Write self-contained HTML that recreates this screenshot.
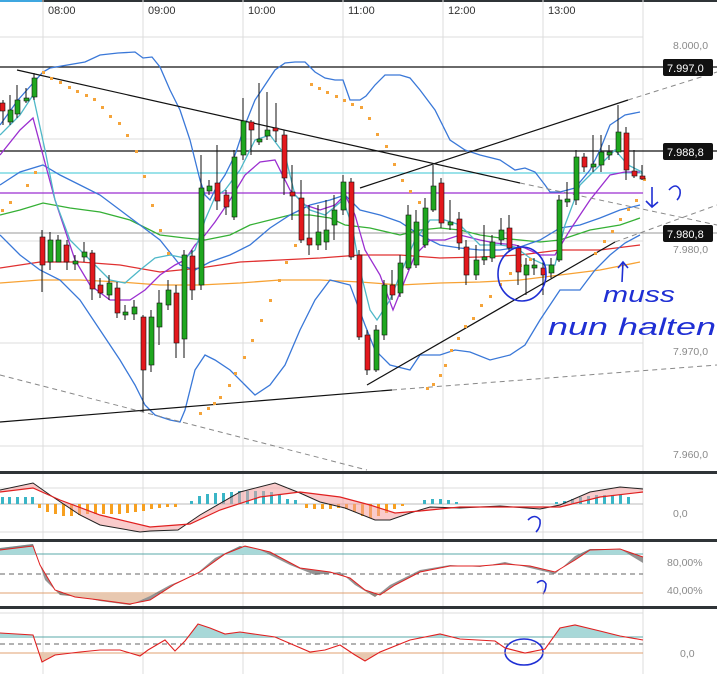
<!DOCTYPE html>
<html><head><meta charset="utf-8"><style>
html,body{margin:0;padding:0;background:#fff;}
svg{display:block;font-family:"Liberation Sans",sans-serif;}
.ax{font-size:10.5px;fill:#8a8a8a;}
.tm{font-size:11px;fill:#333;}
.lb{font-size:11px;fill:#fff;}
.hw{font-family:"Liberation Sans",sans-serif;font-style:italic;fill:#1f2fd4;}
</style></head><body>
<svg width="717" height="674" viewBox="0 0 717 674">
<defs>
<clipPath id="ct"><rect x="0" y="540" width="717" height="14"/></clipPath>
<clipPath id="co"><rect x="0" y="593" width="717" height="14"/></clipPath>
<clipPath id="ct2"><rect x="0" y="607" width="717" height="30"/></clipPath>
<clipPath id="co2"><rect x="0" y="653" width="717" height="21"/></clipPath>
</defs>
<rect width="717" height="674" fill="#fff"/>
<rect x="0" y="0" width="717" height="2" fill="#2f3437"/>
<rect x="0" y="0" width="42" height="2" fill="#3fa7e0"/>
<g stroke="#dcdcdc" stroke-width="1">
<line x1="43" y1="0" x2="43" y2="674"/><line x1="143" y1="0" x2="143" y2="674"/>
<line x1="243" y1="0" x2="243" y2="674"/><line x1="343" y1="0" x2="343" y2="674"/>
<line x1="443" y1="0" x2="443" y2="674"/><line x1="543" y1="0" x2="543" y2="674"/>
<line x1="643" y1="0" x2="643" y2="674"/>
<line x1="0" y1="37" x2="643" y2="37"/><line x1="0" y1="139" x2="643" y2="139"/>
<line x1="0" y1="241" x2="643" y2="241"/><line x1="0" y1="343" x2="643" y2="343"/>
<line x1="0" y1="446" x2="643" y2="446"/>
<line x1="0" y1="488" x2="643" y2="488"/><line x1="0" y1="532" x2="643" y2="532"/>
<line x1="0" y1="613" x2="643" y2="613"/>
</g>
<g class="tm"><text x="48" y="14">08:00</text><text x="148" y="14">09:00</text><text x="248" y="14">10:00</text><text x="348" y="14">11:00</text><text x="448" y="14">12:00</text><text x="548" y="14">13:00</text></g>
<line x1="0" y1="67" x2="717" y2="67" stroke="#111" stroke-width="1.2"/>
<line x1="0" y1="151" x2="717" y2="151" stroke="#111" stroke-width="1.2"/>
<line x1="0" y1="173" x2="643" y2="173" stroke="#5fd0dc" stroke-width="1.2"/>
<line x1="0" y1="193" x2="643" y2="193" stroke="#9b2fd0" stroke-width="1.2"/>
<line x1="0" y1="233" x2="717" y2="233" stroke="#999" stroke-width="1"/>
<g fill="none" stroke-width="1.3">
<polyline stroke="#f7a234" points="0,283 40,280 80,280 120,282 160,285 200,285 240,283 280,280 320,280 360,282 400,285 440,283 480,282 520,280 560,275 600,270 640,262"/>
<polyline stroke="#e03030" points="0,268 40,262 80,262 120,265 160,272 200,268 240,262 280,260 320,258 360,255 400,255 440,258 480,257 520,255 560,250 600,250 640,245"/>
<polyline stroke="#35b035" points="0,215 20,210 43,203 70,208 100,212 130,220 160,235 185,238 205,240 230,235 250,225 270,220 290,215 310,215 330,218 345,225 370,228 400,235 420,230 440,228 460,230 480,235 500,238 540,242 560,240 590,230 620,225 640,218"/>
<polyline stroke="#3a78d8" points="0,185 20,172 43,165 60,175 80,185 100,195 120,210 140,225 160,240 180,265 195,270 210,262 230,255 250,245 270,228 290,215 310,205 330,200 345,195 360,210 380,215 400,222 420,235 440,245 460,248 480,250 500,250 520,247 540,240 560,228 580,225 600,218 620,210 640,205"/>
<polyline stroke="#3a78d8" points="0,125 18,100 43,72 50,68 85,62 100,55 118,53 135,52 143,58 152,57 160,67 170,90 180,110 190,140 200,180 205,195 210,200 215,190 225,175 235,155 245,125 255,100 265,85 275,70 285,63 295,62 305,62 315,72 325,78 335,80 343,80 350,100 360,100 366,96 375,85 385,75 400,75 410,78 420,90 435,110 450,140 465,150 480,155 500,160 515,170 525,168 535,172 545,185 550,192 560,192 575,188 590,170 600,150 610,125 625,115 640,112"/>
<polyline stroke="#3a78d8" points="0,235 20,255 40,270 60,280 80,300 100,330 120,360 135,385 145,405 155,415 170,420 180,422 185,410 195,370 205,355 215,360 230,370 245,385 255,395 270,385 285,365 300,330 315,300 330,280 350,285 365,325 375,350 390,365 410,370 420,355 440,355 455,350 470,352 490,360 510,355 525,345 540,320 560,290 580,290 595,270 610,255 625,243 640,235"/>
<polyline stroke="#9b2fd0" points="0,155 20,130 33,118 55,200 75,260 90,285 110,300 130,300 145,290 160,275 175,265 185,260 195,245 205,235 215,222 230,200 245,175 260,162 275,160 290,190 305,205 320,210 335,205 345,195 355,215 365,250 380,275 393,310 405,280 415,255 430,240 445,240 460,235 480,240 495,243 515,245 525,248 540,255 555,255 570,230 590,200 610,175 625,172 640,172"/>
<polyline stroke="#4fb8c8" points="0,135 20,115 33,95 45,150 55,200 70,240 90,260 110,280 125,283 140,270 155,258 170,255 185,258 195,250 205,220 215,197 225,190 240,170 255,140 270,135 285,155 295,195 310,210 325,215 343,200 352,225 360,270 370,310 377,320 390,300 400,275 415,240 430,220 445,220 460,225 480,245 500,245 515,247 530,258 545,265 555,265 565,225 580,185 600,165 615,150 628,165 642,172"/>
</g>
<g stroke="#111" stroke-width="1.2">
<line x1="17" y1="70" x2="520" y2="183"/>
<line x1="360" y1="188" x2="628" y2="100"/>
<line x1="367" y1="385" x2="615" y2="242"/>
<line x1="0" y1="422" x2="392" y2="390"/>
</g>
<g stroke="#888" stroke-width="1" stroke-dasharray="5,4">
<line x1="520" y1="183" x2="717" y2="225"/>
<line x1="628" y1="100" x2="717" y2="72"/>
<line x1="615" y1="242" x2="717" y2="205"/>
<line x1="392" y1="390" x2="717" y2="365"/>
<line x1="0" y1="375" x2="367" y2="470"/>
</g>
<g fill="#f5a43a">
<rect x="1" y="209" width="3" height="3"/><rect x="9" y="201" width="3" height="3"/><rect x="26" y="184" width="3" height="3"/><rect x="34" y="171" width="3" height="3"/>
<rect x="42" y="71" width="3" height="3"/><rect x="50" y="77" width="3" height="3"/><rect x="59" y="81" width="3" height="3"/><rect x="68" y="86" width="3" height="3"/><rect x="76" y="90" width="3" height="3"/><rect x="85" y="94" width="3" height="3"/><rect x="93" y="98" width="3" height="3"/><rect x="101" y="106" width="3" height="3"/><rect x="109" y="115" width="3" height="3"/><rect x="118" y="122" width="3" height="3"/><rect x="126" y="134" width="3" height="3"/><rect x="135" y="150" width="3" height="3"/><rect x="143" y="175" width="3" height="3"/><rect x="151" y="204" width="3" height="3"/><rect x="159" y="229" width="3" height="3"/><rect x="167" y="252" width="3" height="3"/>
<rect x="199" y="412" width="3" height="3"/><rect x="207" y="407" width="3" height="3"/><rect x="213" y="402" width="3" height="3"/><rect x="219" y="396" width="3" height="3"/><rect x="228" y="384" width="3" height="3"/><rect x="234" y="372" width="3" height="3"/><rect x="243" y="356" width="3" height="3"/><rect x="251" y="339" width="3" height="3"/><rect x="260" y="319" width="3" height="3"/><rect x="269" y="299" width="3" height="3"/><rect x="278" y="279" width="3" height="3"/><rect x="285" y="261" width="3" height="3"/><rect x="294" y="244" width="3" height="3"/>
<rect x="310" y="83" width="3" height="3"/><rect x="318" y="87" width="3" height="3"/><rect x="326" y="91" width="3" height="3"/><rect x="335" y="95" width="3" height="3"/><rect x="343" y="99" width="3" height="3"/><rect x="351" y="103" width="3" height="3"/><rect x="360" y="106" width="3" height="3"/><rect x="368" y="117" width="3" height="3"/><rect x="376" y="133" width="3" height="3"/><rect x="385" y="145" width="3" height="3"/><rect x="393" y="163" width="3" height="3"/><rect x="401" y="179" width="3" height="3"/><rect x="409" y="190" width="3" height="3"/><rect x="418" y="201" width="3" height="3"/>
<rect x="426" y="387" width="3" height="3"/><rect x="432" y="383" width="3" height="3"/><rect x="439" y="374" width="3" height="3"/><rect x="444" y="364" width="3" height="3"/><rect x="450" y="349" width="3" height="3"/><rect x="457" y="337" width="3" height="3"/><rect x="464" y="325" width="3" height="3"/><rect x="472" y="317" width="3" height="3"/><rect x="480" y="304" width="3" height="3"/><rect x="489" y="295" width="3" height="3"/><rect x="499" y="283" width="3" height="3"/><rect x="509" y="272" width="3" height="3"/><rect x="519" y="264" width="3" height="3"/><rect x="529" y="258" width="3" height="3"/><rect x="594" y="252" width="3" height="3"/><rect x="603" y="240" width="3" height="3"/><rect x="611" y="230" width="3" height="3"/><rect x="619" y="218" width="3" height="3"/><rect x="627" y="208" width="3" height="3"/><rect x="635" y="199" width="3" height="3"/><rect x="643" y="178" width="3" height="3"/>
</g>
<g stroke="#111" stroke-width="1">
<line x1="3" y1="100" x2="3" y2="125"/><line x1="10" y1="95" x2="10" y2="125"/><line x1="17" y1="85" x2="17" y2="118"/><line x1="26" y1="88" x2="26" y2="103"/><line x1="34" y1="73" x2="34" y2="100"/>
<line x1="42" y1="230" x2="42" y2="292"/><line x1="50" y1="232" x2="50" y2="270"/><line x1="58" y1="235" x2="58" y2="262"/><line x1="67" y1="240" x2="67" y2="270"/><line x1="75" y1="255" x2="75" y2="270"/><line x1="84" y1="242" x2="84" y2="262"/><line x1="92" y1="250" x2="92" y2="300"/><line x1="100" y1="278" x2="100" y2="298"/><line x1="109" y1="275" x2="109" y2="300"/><line x1="117" y1="282" x2="117" y2="318"/><line x1="125" y1="305" x2="125" y2="320"/><line x1="134" y1="300" x2="134" y2="320"/><line x1="143" y1="315" x2="143" y2="412"/><line x1="151" y1="310" x2="151" y2="372"/><line x1="159" y1="290" x2="159" y2="345"/><line x1="168" y1="280" x2="168" y2="310"/><line x1="176" y1="285" x2="176" y2="358"/><line x1="184" y1="250" x2="184" y2="358"/><line x1="192" y1="250" x2="192" y2="300"/>
<line x1="201" y1="155" x2="201" y2="290"/><line x1="209" y1="180" x2="209" y2="195"/><line x1="217" y1="145" x2="217" y2="210"/><line x1="226" y1="190" x2="226" y2="215"/><line x1="234" y1="150" x2="234" y2="220"/><line x1="243" y1="98" x2="243" y2="160"/><line x1="251" y1="120" x2="251" y2="155"/><line x1="259" y1="83" x2="259" y2="145"/><line x1="267" y1="92" x2="267" y2="140"/><line x1="276" y1="103" x2="276" y2="142"/><line x1="284" y1="130" x2="284" y2="195"/><line x1="292" y1="165" x2="292" y2="220"/><line x1="301" y1="180" x2="301" y2="243"/><line x1="309" y1="205" x2="309" y2="255"/><line x1="318" y1="205" x2="318" y2="250"/><line x1="326" y1="200" x2="326" y2="250"/><line x1="334" y1="195" x2="334" y2="240"/><line x1="343" y1="175" x2="343" y2="215"/><line x1="351" y1="178" x2="351" y2="260"/><line x1="359" y1="250" x2="359" y2="340"/><line x1="367" y1="330" x2="367" y2="375"/><line x1="376" y1="325" x2="376" y2="372"/><line x1="384" y1="280" x2="384" y2="340"/><line x1="392" y1="270" x2="392" y2="300"/><line x1="400" y1="255" x2="400" y2="297"/><line x1="408" y1="205" x2="408" y2="270"/><line x1="416" y1="210" x2="416" y2="268"/><line x1="425" y1="198" x2="425" y2="248"/><line x1="433" y1="165" x2="433" y2="212"/><line x1="441" y1="178" x2="441" y2="228"/><line x1="450" y1="200" x2="450" y2="230"/><line x1="459" y1="212" x2="459" y2="250"/><line x1="466" y1="240" x2="466" y2="285"/><line x1="476" y1="245" x2="476" y2="280"/><line x1="484" y1="225" x2="484" y2="265"/><line x1="492" y1="235" x2="492" y2="262"/><line x1="501" y1="218" x2="501" y2="245"/><line x1="509" y1="215" x2="509" y2="252"/><line x1="518" y1="245" x2="518" y2="285"/><line x1="526" y1="258" x2="526" y2="295"/><line x1="534" y1="258" x2="534" y2="275"/><line x1="543" y1="262" x2="543" y2="295"/><line x1="551" y1="258" x2="551" y2="278"/><line x1="559" y1="195" x2="559" y2="262"/><line x1="567" y1="182" x2="567" y2="207"/><line x1="576" y1="150" x2="576" y2="205"/><line x1="584" y1="153" x2="584" y2="172"/><line x1="593" y1="135" x2="593" y2="172"/><line x1="601" y1="135" x2="601" y2="172"/><line x1="609" y1="145" x2="609" y2="160"/><line x1="618" y1="105" x2="618" y2="155"/><line x1="626" y1="127" x2="626" y2="180"/><line x1="634" y1="150" x2="634" y2="178"/><line x1="642" y1="165" x2="642" y2="180"/>
</g>
<g stroke="#111" stroke-width="0.6">
<g fill="#1fa71f">
<rect x="8" y="110" width="5" height="12"/><rect x="15" y="100" width="5" height="14"/><rect x="32" y="78" width="5" height="19"/>
<rect x="48" y="240" width="5" height="22"/><rect x="56" y="240" width="5" height="22"/><rect x="82" y="252" width="5" height="5"/><rect x="107" y="283" width="5" height="12"/><rect x="132" y="307" width="5" height="7"/><rect x="149" y="317" width="5" height="48"/><rect x="157" y="303" width="5" height="24"/><rect x="166" y="290" width="5" height="15"/><rect x="182" y="255" width="5" height="84"/>
<rect x="199" y="188" width="5" height="97"/><rect x="207" y="186" width="5" height="5"/><rect x="232" y="157" width="5" height="60"/><rect x="241" y="121" width="5" height="34"/><rect x="265" y="130" width="5" height="6"/><rect x="316" y="232" width="5" height="13"/><rect x="324" y="230" width="5" height="12"/><rect x="332" y="210" width="5" height="15"/><rect x="341" y="182" width="5" height="28"/>
<rect x="374" y="330" width="5" height="40"/><rect x="382" y="285" width="5" height="50"/><rect x="398" y="263" width="5" height="30"/><rect x="406" y="215" width="5" height="53"/><rect x="414" y="222" width="5" height="43"/><rect x="423" y="208" width="5" height="37"/><rect x="431" y="186" width="5" height="24"/><rect x="474" y="260" width="5" height="15"/><rect x="490" y="242" width="5" height="16"/><rect x="499" y="230" width="5" height="10"/><rect x="524" y="265" width="5" height="10"/><rect x="549" y="265" width="5" height="8"/><rect x="557" y="200" width="5" height="60"/><rect x="574" y="157" width="5" height="43"/><rect x="599" y="152" width="5" height="13"/><rect x="616" y="132" width="5" height="20"/>
</g>
<g fill="#e3181d">
<rect x="0" y="103" width="5" height="8"/>
<rect x="40" y="237" width="5" height="28"/><rect x="64" y="245" width="5" height="17"/><rect x="90" y="253" width="5" height="36"/><rect x="98" y="285" width="5" height="8"/><rect x="115" y="288" width="5" height="25"/><rect x="141" y="317" width="5" height="53"/><rect x="174" y="293" width="5" height="50"/><rect x="190" y="256" width="5" height="34"/>
<rect x="215" y="183" width="5" height="18"/><rect x="224" y="195" width="5" height="12"/><rect x="249" y="122" width="5" height="8"/><rect x="273" y="128" width="5" height="3"/><rect x="282" y="135" width="5" height="43"/><rect x="290" y="192" width="5" height="4"/><rect x="299" y="198" width="5" height="42"/><rect x="307" y="238" width="5" height="7"/><rect x="349" y="182" width="5" height="75"/><rect x="357" y="255" width="5" height="82"/><rect x="365" y="335" width="5" height="35"/><rect x="390" y="285" width="5" height="10"/>
<rect x="439" y="183" width="5" height="40"/><rect x="457" y="219" width="5" height="24"/><rect x="464" y="247" width="5" height="28"/><rect x="507" y="228" width="5" height="20"/><rect x="516" y="248" width="5" height="24"/><rect x="541" y="268" width="5" height="7"/><rect x="582" y="157" width="5" height="10"/><rect x="624" y="133" width="5" height="37"/><rect x="632" y="171" width="5" height="5"/><rect x="640" y="176" width="5" height="3"/>
</g>
<g fill="#1fa71f">
<rect x="24" y="98" width="5" height="3"/><rect x="73" y="261" width="5" height="3"/><rect x="123" y="312" width="5" height="3"/><rect x="257" y="139" width="5" height="3"/><rect x="448" y="222" width="5" height="3"/><rect x="482" y="257" width="5" height="3"/><rect x="532" y="265" width="5" height="3"/><rect x="565" y="199" width="5" height="3"/><rect x="591" y="164" width="5" height="3"/><rect x="607" y="152" width="5" height="3"/>
</g>
</g>
<g class="ax"><text x="673" y="49">8.000,0</text><text x="673" y="253">7.980,0</text><text x="673" y="355">7.970,0</text><text x="673" y="458">7.960,0</text>
<text x="673" y="517">0,0</text><text x="667" y="566">80,00%</text><text x="667" y="594">40,00%</text><text x="680" y="657">0,0</text></g>
<g><rect x="663" y="59" width="50" height="17" rx="2" fill="#111"/><text class="lb" x="667" y="72">7.997,0</text>
<rect x="663" y="143" width="50" height="17" rx="2" fill="#111"/><text class="lb" x="667" y="156">7.988,8</text>
<rect x="663" y="225" width="50" height="17" rx="2" fill="#111"/><text class="lb" x="667" y="238">7.980,8</text></g>
<g fill="none" stroke="#1f2fd4" stroke-width="1.6">
<ellipse cx="522" cy="274" rx="24" ry="27"/>
<path d="M652 187 L652 207 M646 201 L652 207 L658 202"/>
<path d="M669 190 Q676 182 680 190 Q681 196 677 200"/>
<path d="M622 282 L623 262 M618 268 L623 262 L628 268"/>
<ellipse cx="524" cy="652" rx="19" ry="13"/>
<path d="M528 520 Q535 513 540 520 Q541 527 536 532"/>
<path d="M537 583 Q543 578 546 584 Q546 590 543 594"/>
</g>
<text class="hw" x="603" y="302" font-size="22" textLength="72" lengthAdjust="spacingAndGlyphs">muss</text>
<text class="hw" x="548" y="335" font-size="24" textLength="168" lengthAdjust="spacingAndGlyphs">nun halten</text>
<rect x="0" y="471" width="717" height="3" fill="#2f3437"/>
<rect x="0" y="539" width="717" height="3" fill="#2f3437"/>
<rect x="0" y="606" width="717" height="3" fill="#2f3437"/>
<line x1="0" y1="504" x2="643" y2="504" stroke="#bbb"/>
<g fill="#3ab5c6">
<rect x="1" y="497" width="3" height="7"/><rect x="8" y="497" width="3" height="7"/><rect x="16" y="497" width="3" height="7"/><rect x="24" y="497" width="3" height="7"/><rect x="31" y="497" width="3" height="7"/>
<rect x="190" y="501" width="3" height="3"/><rect x="198" y="496" width="3" height="8"/><rect x="206" y="494" width="3" height="10"/><rect x="214" y="493" width="3" height="11"/><rect x="222" y="493" width="3" height="11"/><rect x="230" y="492" width="3" height="12"/><rect x="238" y="491" width="3" height="13"/><rect x="246" y="491" width="3" height="13"/><rect x="254" y="491" width="3" height="13"/><rect x="262" y="491" width="3" height="13"/><rect x="270" y="492" width="3" height="12"/><rect x="278" y="495" width="3" height="9"/><rect x="286" y="499" width="3" height="5"/><rect x="294" y="500" width="3" height="4"/>
<rect x="423" y="500" width="3" height="4"/><rect x="431" y="499" width="3" height="5"/><rect x="439" y="499" width="3" height="5"/><rect x="447" y="500" width="3" height="4"/><rect x="455" y="502" width="3" height="2"/>
<rect x="555" y="502" width="3" height="2"/><rect x="563" y="501" width="3" height="3"/><rect x="571" y="499" width="3" height="5"/><rect x="579" y="497" width="3" height="7"/><rect x="587" y="496" width="3" height="8"/><rect x="595" y="495" width="3" height="9"/><rect x="603" y="495" width="3" height="9"/><rect x="611" y="495" width="3" height="9"/><rect x="619" y="495" width="3" height="9"/><rect x="627" y="497" width="3" height="7"/>
</g>
<g fill="#f7a020">
<rect x="38" y="504" width="3" height="4"/><rect x="46" y="504" width="3" height="8"/><rect x="54" y="504" width="3" height="10"/><rect x="62" y="504" width="3" height="12"/><rect x="70" y="504" width="3" height="12"/><rect x="78" y="504" width="3" height="11"/><rect x="86" y="504" width="3" height="10"/><rect x="94" y="504" width="3" height="10"/><rect x="102" y="504" width="3" height="10"/><rect x="110" y="504" width="3" height="10"/><rect x="118" y="504" width="3" height="10"/><rect x="126" y="504" width="3" height="9"/><rect x="134" y="504" width="3" height="8"/><rect x="142" y="504" width="3" height="7"/><rect x="150" y="504" width="3" height="5"/><rect x="158" y="504" width="3" height="4"/><rect x="166" y="504" width="3" height="3"/><rect x="174" y="504" width="3" height="3"/>
<rect x="305" y="504" width="3" height="4"/><rect x="313" y="504" width="3" height="5"/><rect x="321" y="504" width="3" height="5"/><rect x="329" y="504" width="3" height="5"/><rect x="337" y="504" width="3" height="4"/><rect x="345" y="504" width="3" height="5"/><rect x="353" y="504" width="3" height="8"/><rect x="361" y="504" width="3" height="12"/><rect x="369" y="504" width="3" height="14"/><rect x="377" y="504" width="3" height="12"/><rect x="385" y="504" width="3" height="9"/><rect x="393" y="504" width="3" height="5"/><rect x="401" y="504" width="3" height="2"/>
</g>
<polygon fill="#f4a0a0" fill-opacity="0.55" points="0,490 33,483 50,495 80,515 100,525 140,532 150,531 178,530 200,515 240,492 275,483 300,493 320,502 345,508 375,520 390,520 410,513 430,507 460,508 500,506 540,509 560,505 590,492 620,487 643,489 643,492 600,497 560,507 540,507 500,507 460,507 420,511 395,513 370,505 340,497 300,492 260,497 220,510 190,524 150,527 100,515 60,500 33,488 0,492"/>
<polyline fill="none" stroke="#222" stroke-width="1" points="0,490 33,483 50,495 80,515 100,525 140,532 150,531 178,530 200,515 240,492 275,483 300,493 320,502 345,508 375,520 390,520 410,513 430,507 460,508 500,506 540,509 560,505 590,492 620,487 643,489"/>
<polyline fill="none" stroke="#e02020" stroke-width="1.2" points="0,492 33,488 60,500 100,515 150,527 190,524 220,510 260,497 300,492 340,497 370,505 395,513 420,511 460,507 500,507 540,507 560,507 600,497 643,492"/>
<line x1="0" y1="554" x2="643" y2="554" stroke="#5aa8a8"/>
<line x1="0" y1="574" x2="643" y2="574" stroke="#666" stroke-dasharray="5,4"/>
<line x1="0" y1="593" x2="643" y2="593" stroke="#e0a070"/>
<polygon clip-path="url(#ct)" fill="#a8d8d8" points="0,548 33,544 45,580 60,595 80,597 100,601 130,605 150,596 170,585 195,575 215,558 240,546 260,550 290,565 315,575 340,572 355,585 375,597 390,585 420,570 450,565 480,567 505,562 530,568 555,574 575,556 590,549 620,549 643,563 643,554 0,554"/>
<polygon clip-path="url(#co)" fill="#e8c8b0" points="0,548 33,544 45,580 60,595 80,597 100,601 130,605 150,596 170,585 195,575 215,558 240,546 260,550 290,565 315,575 340,572 355,585 375,597 390,585 420,570 450,565 480,567 505,562 530,568 555,574 575,556 590,549 620,549 643,563 643,593 0,593"/>
<polygon fill="#666" fill-opacity="0.7" points="0,548 33,544 45,580 60,595 80,597 100,601 130,605 150,596 170,585 195,575 215,558 240,546 260,550 290,565 315,575 340,572 355,585 375,597 390,585 420,570 450,565 480,567 505,562 530,568 555,574 575,556 590,549 620,549 643,563 643,557 620,549 590,550 575,560 555,572 530,566 505,564 480,566 450,566 420,572 395,585 380,595 365,590 350,578 330,572 300,568 270,552 245,546 225,554 200,572 175,584 150,600 130,604 100,600 75,597 55,590 40,565 33,546 0,550"/>
<polyline fill="none" stroke="#e02020" stroke-width="1" points="0,550 33,546 40,565 55,590 75,597 100,600 130,604 150,600 175,584 200,572 225,554 245,546 270,552 300,568 330,572 350,578 365,590 380,595 395,585 420,572 450,566 480,566 505,564 530,566 555,572 575,560 590,550 620,549 643,557"/>
<line x1="0" y1="637" x2="643" y2="637" stroke="#5aa8a8"/>
<line x1="0" y1="644" x2="643" y2="644" stroke="#666" stroke-dasharray="5,4"/>
<line x1="0" y1="653" x2="643" y2="653" stroke="#e0a070"/>
<polygon clip-path="url(#ct2)" fill="#a8d8d8" points="0,633 33,635 42,662 55,655 80,652 100,650 120,650 140,656 148,650 165,640 175,651 185,641 198,624 210,628 225,634 240,632 275,637 310,652 325,650 340,645 355,655 365,661 380,652 410,640 440,634 460,639 495,641 505,648 525,653 545,649 560,628 575,625 600,631 620,636 643,640 643,637 0,637"/>
<polygon clip-path="url(#co2)" fill="#e8c8b0" points="0,633 33,635 42,662 55,655 80,652 100,650 120,650 140,656 148,650 165,640 175,651 185,641 198,624 210,628 225,634 240,632 275,637 310,652 325,650 340,645 355,655 365,661 380,652 410,640 440,634 460,639 495,641 505,648 525,653 545,649 560,628 575,625 600,631 620,636 643,640 643,653 0,653"/>
<polyline fill="none" stroke="#e02020" stroke-width="1.1" points="0,633 33,635 42,662 55,655 80,652 100,650 120,650 140,656 148,650 165,640 175,651 185,641 198,624 210,628 225,634 240,632 275,637 310,652 325,650 340,645 355,655 365,661 380,652 410,640 440,634 460,639 495,641 505,648 525,653 545,649 560,628 575,625 600,631 620,636 643,640"/>
</svg>
</body></html>
